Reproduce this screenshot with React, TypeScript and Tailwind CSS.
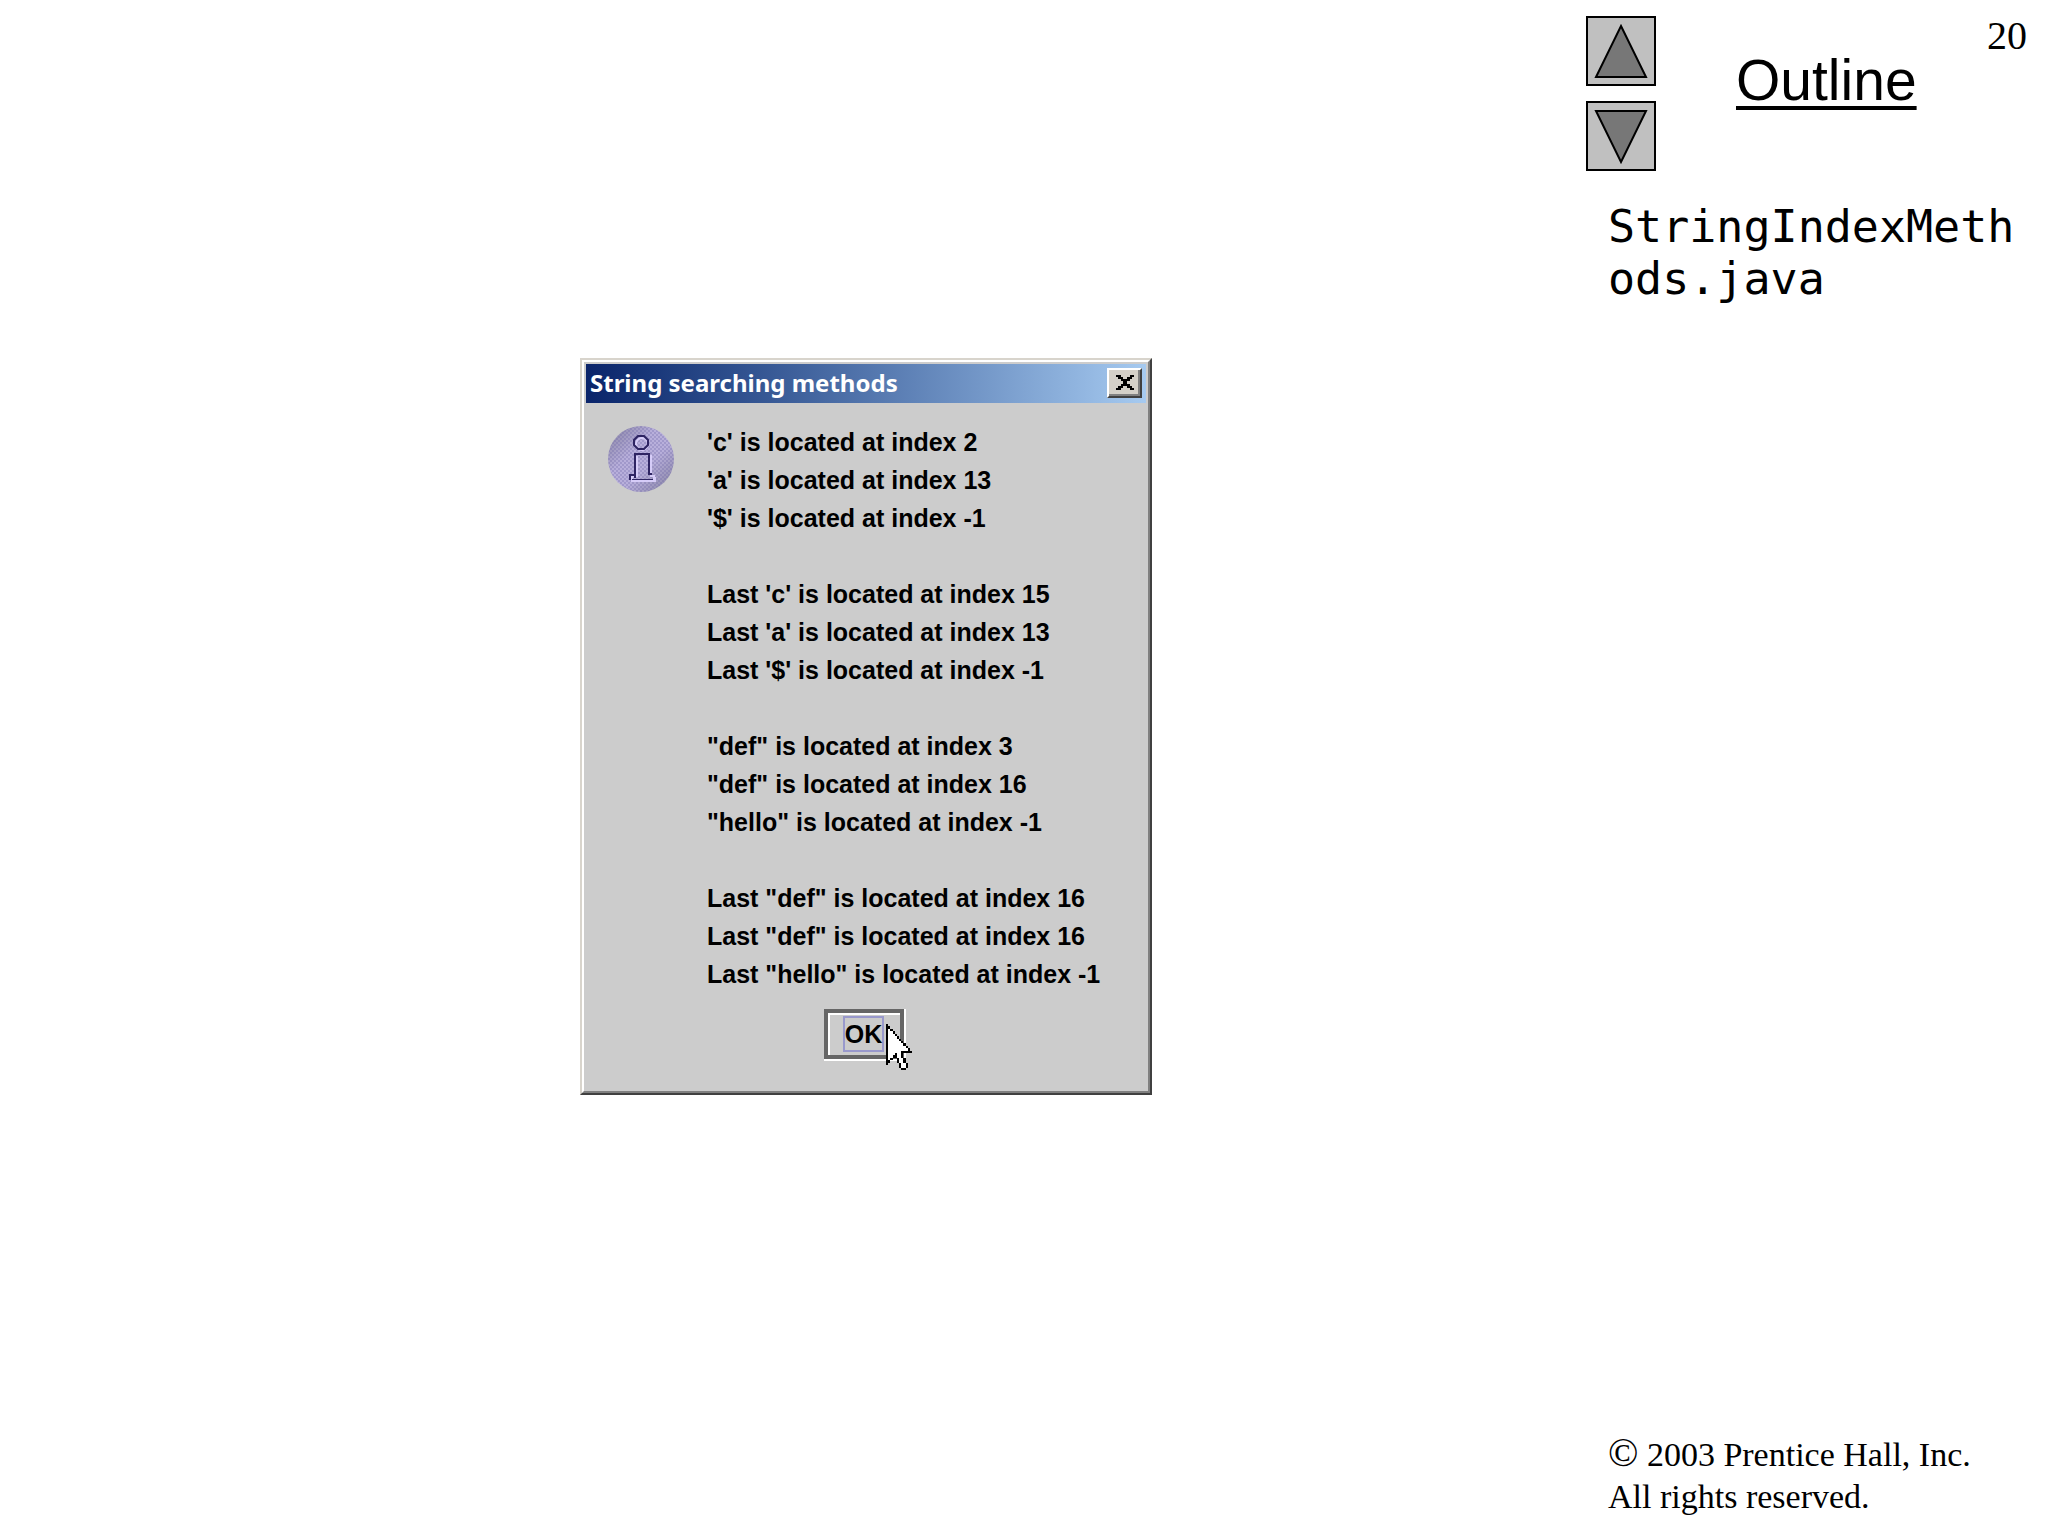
import React from 'react';

const messageGroups = [
  ["'c' is located at index 2", "'a' is located at index 13", "'$' is located at index -1"],
  ["Last 'c' is located at index 15", "Last 'a' is located at index 13", "Last '$' is located at index -1"],
  ['"def" is located at index 3', '"def" is located at index 16', '"hello" is located at index -1'],
  ['Last "def" is located at index 16', 'Last "def" is located at index 16', 'Last "hello" is located at index -1'],
];

// Arrow pointer bitmap: X = black, . = white
const cursorRows = [
  'X',
  'XX',
  'X.X',
  'X..X',
  'X...X',
  'X....X',
  'X.....X',
  'X......X',
  'X.......X',
  'X........X',
  'X.........X',
  'X......XXXXX',
  'X...X..X',
  'X..XX..X',
  'X.X  X..X',
  'XX   X..X',
  'X     X..X',
  '      X..X',
  '       XX',
];

const closeRows = ['XX    XX', ' XX  XX ', '  XXXX  ', '   XX   ', '  XXXX  ', ' XX  XX ', 'XX    XX'];

// Draws a small bitmap as SVG squares
const Bitmap = ({ rows, className }: { rows: string[]; className: string }) => {
  const width = Math.max(...rows.map((row) => row.length));
  return (
    <svg
      className={className}
      viewBox={`0 0 ${width} ${rows.length}`}
      preserveAspectRatio="none"
      shapeRendering="crispEdges"
      aria-hidden="true"
    >
      {rows.map((row, y) =>
        row.split('').map((cell, x) =>
          cell === ' ' ? null : (
            <rect key={`${x}-${y}`} x={x} y={y} width="1" height="1" fill={cell === 'X' ? '#000' : '#fff'} />
          )
        )
      )}
    </svg>
  );
};

const InfoIcon = () => (
  <svg className="mt-[3px] h-[66px] w-[66px] shrink-0" viewBox="0 0 66 66" role="img" aria-label="Information">
    <defs>
      <linearGradient id="ball" x1="0" y1="0" x2="1" y2="1">
        <stop offset="0.1" stopColor="#918cae" />
        <stop offset="0.38" stopColor="#b8afdb" />
        <stop offset="0.6" stopColor="#b8afdb" />
        <stop offset="0.9" stopColor="#918cae" />
      </linearGradient>
      <pattern id="dither" width="4" height="4" patternUnits="userSpaceOnUse">
        <rect width="2" height="2" fill="#6f66a8" fillOpacity="0.3" />
        <rect x="2" y="2" width="2" height="2" fill="#6f66a8" fillOpacity="0.3" />
      </pattern>
    </defs>
    <circle cx="33" cy="33" r="33" fill="url(#ball)" />
    <circle cx="33" cy="33" r="33" fill="url(#dither)" />
    <g fill="none" strokeWidth="2">
      <circle cx="34" cy="18" r="6" stroke="#d6ccf8" />
      <path d="M29 30V50H24V54H46V50H43V29" stroke="#d6ccf8" />
      <path d="M30 10H36L40 14V19L36 23H30L26 19V14Z" stroke="#2e2462" />
      <path d="M27 52V28H41V48H44M27 49H22V54M24 54H45" stroke="#2e2462" />
    </g>
    <path d="M23 55H47V51" fill="none" stroke="#d6ccf8" strokeWidth="2" />
  </svg>
);

const NavButton = ({ direction }: { direction: 'up' | 'down' }) => (
  <button
    type="button"
    aria-label={direction === 'up' ? 'Previous' : 'Next'}
    className="h-[70px] w-[70px] border-2 border-black bg-[#c0c0c0]"
  >
    <svg viewBox="0 0 66 66" className="h-full w-full" fill="#777" stroke="#000" strokeWidth="2">
      {direction === 'up' ? <path d="M33 8L58 59H8Z" /> : <path d="M33 59L58 8H8Z" />}
    </svg>
  </button>
);

const MessageDialog = () => (
  <div
    role="dialog"
    aria-labelledby="dialog-title"
    className="w-[572px] border-2 border-t-[#d8d4cc] border-r-[#404040] border-b-[#404040] border-l-[#d8d4cc] bg-[#ccc]"
  >
    <div className="border-2 border-t-white border-r-[#808080] border-b-[#808080] border-l-white p-0.5">
      <div className="flex h-[39px] items-center justify-between bg-linear-to-r from-[#0a246a] to-[#a6caf0] px-1 pb-0.5">
        <h2 id="dialog-title" className="font-['Noto_Sans'] text-[24px] leading-[32px] font-bold text-white">
          String searching methods
        </h2>
        <button
          type="button"
          aria-label="Close"
          className="flex h-[30px] w-[35px] items-center justify-center border-2 border-t-white border-r-[#404040] border-b-[#404040] border-l-white bg-[#d4d0c8] shadow-[inset_-2px_-2px_0_#808080]"
        >
          <Bitmap rows={closeRows} className="h-[15px] w-[18px]" />
        </button>
      </div>

      <div className="flex gap-[33px] pt-5 pl-[22px]">
        <InfoIcon />
        <div className="flex flex-col gap-[38px] text-[25px] leading-[38px] font-bold">
          {messageGroups.map((group, i) => (
            <div key={i}>
              {group.map((line, j) => (
                <p key={j}>{line}</p>
              ))}
            </div>
          ))}
        </div>
      </div>

      <div className="flex justify-center pt-4 pr-[3px] pb-7">
        <button
          type="button"
          className="relative h-[52px] w-[82px] border-r-2 border-b-2 border-white"
        >
          <span className="flex h-full items-center justify-center border-4 border-[#666] shadow-[inset_2px_2px_0_#fff]">
            <span className="border-2 border-[#9999cc] text-[25px] leading-[32px] font-bold">OK</span>
          </span>
          <Bitmap rows={cursorRows} className="absolute top-[15px] left-[62px] h-[46px] w-[26px]" />
        </button>
      </div>
    </div>
  </div>
);

export default function App() {
  return (
    <div className="flex min-h-screen bg-white font-['Liberation_Sans',sans-serif] text-black">
      <main className="flex-1 pt-[358px] pl-[580px]">
        <MessageDialog />
      </main>

      <aside className="flex w-[462px] shrink-0 flex-col pt-4 pb-[18px]">
        <div className="flex items-start pr-[21px]">
          <nav className="flex flex-col gap-[15px]">
            <NavButton direction="up" />
            <NavButton direction="down" />
          </nav>
          <a
            href="#outline"
            className="mt-8 ml-20 text-[57px] leading-[64px] underline decoration-4 underline-offset-[6px]"
          >
            Outline
          </a>
          <span className="ml-auto font-['Liberation_Serif',serif] text-[40px] leading-[40px]">20</span>
        </div>

        <h1 className="mt-[30px] pr-4 pl-[22px] font-['DejaVu_Sans_Mono',monospace] text-[45px] leading-[52px] break-all">
          StringIndexMethods.java
        </h1>

        <footer className="mt-auto pl-[22px] font-['Liberation_Serif',serif] text-[34px] leading-[42px]">
          <p>
            <span className="text-[40px] leading-none">©</span> 2003 Prentice Hall, Inc.
          </p>
          <p>All rights reserved.</p>
        </footer>
      </aside>
    </div>
  );
}
